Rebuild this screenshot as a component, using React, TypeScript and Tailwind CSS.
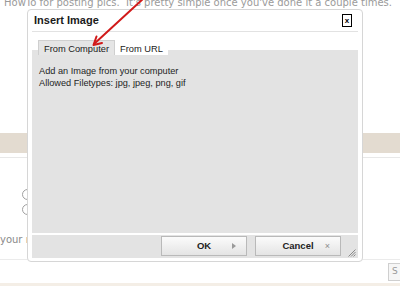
import * as React from 'react';

// ──────────────────────────────────────────────
// Small drawings
// ──────────────────────────────────────────────
const RedArrow = () => (
  <svg
    className="pointer-events-none absolute left-0 top-0 z-20"
    width="400"
    height="60"
    viewBox="0 0 400 60"
    fill="none"
  >
    <path d="M144 -2L94 44" stroke="#d11a1a" strokeWidth="2" strokeLinecap="round" />
    <path d="M96.5 36.5L93.5 45L102 43" stroke="#d11a1a" strokeWidth="2" strokeLinecap="round" strokeLinejoin="round" />
  </svg>
);

const ResizeGrip = () => (
  <svg width="8" height="8" viewBox="0 0 8 8" className="absolute bottom-[1px] right-[2px]">
    <path d="M7.5 0.5L0.5 7.5M7.5 3L3 7.5M7.5 5.5L5.5 7.5" stroke="#8a8a8a" strokeWidth="1" />
  </svg>
);

function DialogButton({ label, icon }: { label: string; icon: React.ReactNode }) {
  return (
    <button className="relative flex h-[20px] w-[86px] items-center justify-center border border-[#b9b9b9] bg-gradient-to-b from-[#fbfbfb] to-[#e4e4e4] text-[9.5px] font-bold text-[#222]">
      {label}
      <span className="absolute right-[10px] top-1/2 -translate-y-1/2 text-[#8c8c8c]">{icon}</span>
    </button>
  );
}

// ──────────────────────────────────────────────
// Insert Image dialog
// ──────────────────────────────────────────────
function InsertImageDialog() {
  return (
    <div className="absolute left-[27px] top-[9px] z-10 flex h-[253px] w-[336px] flex-col rounded-[4px] border border-[#d6d6d6] bg-white px-[4px] pb-[3px] font-['Liberation_Sans',Arial,sans-serif]">
      {/* header */}
      <div className="box-content flex h-[21px] items-center justify-between border-b border-[#e2e2e2] pl-[2px] pr-[6px]">
        <span className="text-[11px] font-bold text-[#1a1a1a]">Insert Image</span>
        <button className="flex h-[13px] w-[10px] items-center justify-center border border-black bg-white text-[8px] font-bold leading-none text-black">
          x
        </button>
      </div>

      {/* tabs */}
      <div className="relative z-10 mb-[-5px] mt-[8px] flex h-[15px] pl-[6px] text-[9.3px] text-[#1a1a1a]">
        <div className="flex h-[15px] w-[77px] items-start justify-center border-x border-t border-[#cfcfcf] bg-[#e5e5e5] pt-[2px]">
          From Computer
        </div>
        <div className="flex h-[15px] w-[53px] items-start justify-center bg-white pt-[3px]">From URL</div>
      </div>

      {/* panel */}
      <div className="h-[183px] bg-[#e3e3e3] pl-[7px] pt-[16px] text-[9.2px] leading-[11.5px] text-[#1e1e1e]">
        <p>Add an Image from your computer</p>
        <p>Allowed Filetypes: jpg, jpeg, png, gif</p>
      </div>

      {/* button bar */}
      <div className="relative mt-[2px] flex h-[23px] items-start justify-end gap-[8px] bg-[#e3e3e3] pr-[17px] pt-[1px]">
        <DialogButton
          label="OK"
          icon={<span className="block h-0 w-0 border-y-[3px] border-l-[4px] border-y-transparent border-l-[#9a9a9a]" />}
        />
        <DialogButton label="Cancel" icon={<span className="text-[9px] font-normal">×</span>} />
        <ResizeGrip />
      </div>
    </div>
  );
}

// ──────────────────────────────────────────────
// Page
// ──────────────────────────────────────────────
export default function App() {
  return (
    <div className="relative h-[286px] w-[400px] overflow-hidden bg-white font-['DejaVu_Sans',Verdana,sans-serif] text-[#9a9a9a]">
      {/* page content behind the dialog */}
      <div className="flex h-full flex-col">
        <p className="mt-[-2px] h-[10px] whitespace-nowrap pl-[4px] text-[10px] leading-[10px]">
          HowTo for posting pics.&nbsp; It's pretty simple once you've done it a couple times.
        </p>

        <div className="mt-[125px] h-[20px] bg-[#e3dbd0]" />
        <div className="mt-[4px] h-px bg-[#e8e8e8]" />

        <div className="mt-[31px] flex flex-col gap-[4px] pl-[22px]">
          <span className="h-[11px] w-[11px] rounded-full border border-[#a0a0a0] bg-white" />
          <span className="h-[11px] w-[11px] rounded-full border border-[#a0a0a0] bg-white" />
        </div>

        <p className="mt-[19px] h-[12px] whitespace-nowrap text-[10px] leading-[12px] text-[#8a8a8a]">your r</p>

        <div className="mt-[13px] h-px bg-[#ebebeb]" />

        <div className="mt-[3px] flex justify-end">
          <div className="mr-[-8px] flex h-[18px] w-[20px] items-center border border-[#cfcfcf] bg-[#f6f6f6] pl-[3px] text-[9px] text-[#999]">
            S
          </div>
        </div>

        <div className="mt-auto h-[3px] bg-[#f4eee6]" />
      </div>

      <InsertImageDialog />
      <RedArrow />
    </div>
  );
}
